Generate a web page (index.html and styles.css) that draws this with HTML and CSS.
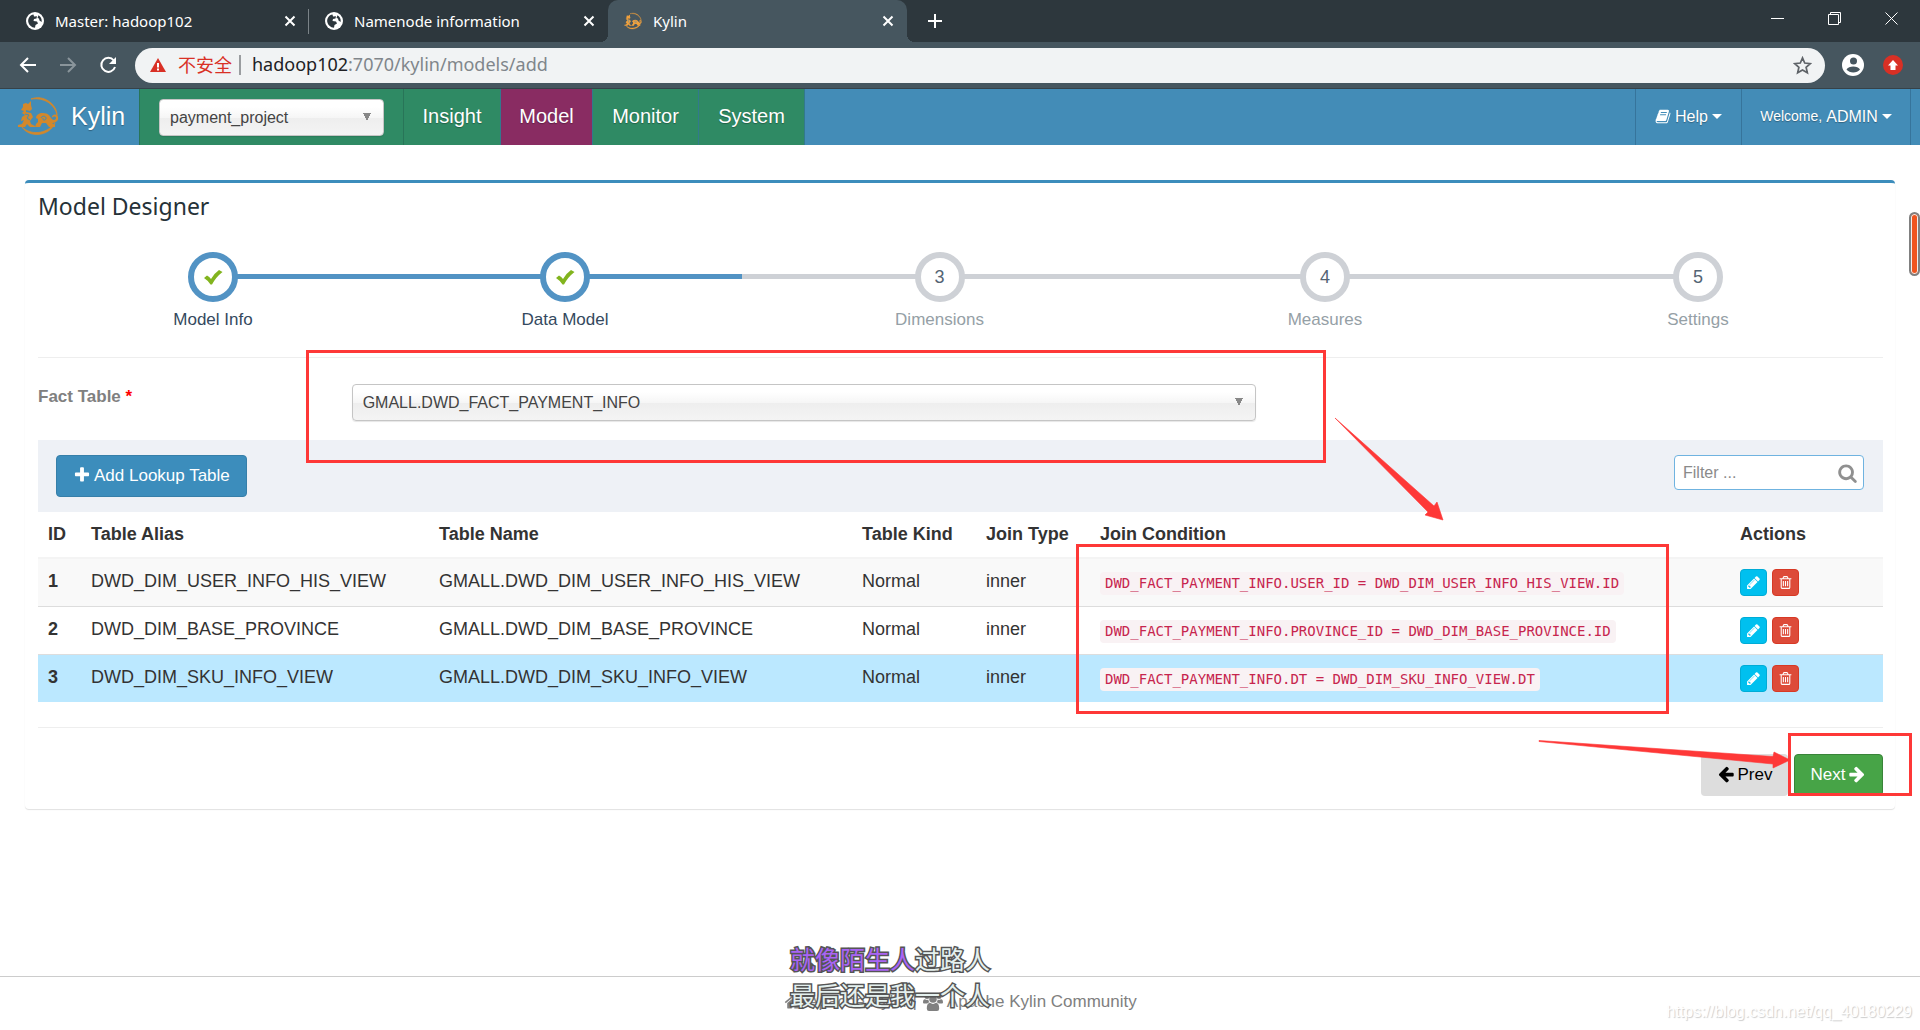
FILE: index.html
```html
<!DOCTYPE html>
<html lang="en">
<head>
<meta charset="utf-8">
<title>Kylin</title>
<link rel="stylesheet" href="styles.css">
</head>
<body>
<svg class="defs" aria-hidden="true">
  <symbol id="globe" viewBox="0 0 18 18"><circle cx="9" cy="9" r="9" fill="#fff"/><path d="M2.200 9.500C2 6 4 3 7.500 2.400L8 4.500 11 4.200 10.500 6.500 8 7 7.500 9 11 9.500 12 11.500 9.500 13 9 15.700C5.500 15.500 2.800 13 2.200 9.500ZM12.500 3.300C14.800 4.700 16 7 15.700 10L13.500 8.500 13 6.500 11.500 6Z" fill="#2d373d"/></symbol>
  <symbol id="cross" viewBox="0 0 12 12"><path d="M1.500 1.500l9 9M10.500 1.500l-9 9" stroke="currentColor" stroke-width="2" fill="none"/></symbol>
  <symbol id="kylin" viewBox="0 0 42 40"><path d="M14 3C26-2 40 8 40 19C38 9 28 1 14 3ZM38 27C32 41 12 42 5 31C13 39 29 39 38 27Z" fill="currentColor" stroke="currentColor" stroke-width=".8"/><path d="M6 8l3-1 2 1 3-3 0 4 1 4-2 2-4-1 0 2 5 1 2 4-3 4 1 3 4 2 0 1-5 0-3-3-2 3-7 0 0-2 4-1 2-4-3 1 1-4 3-2-3-2 2-2-3-1 2-3z" fill="currentColor"/><path d="M19 28l2-2 0-3-2-1c0-3 3-5 7-5 5 0 7 3 8 5 2 3 5 2 5 0 0-2-3-2-4 0-1-4 6-5 6-1 1 4-3 6-6 6l3 2 0 2-6 0-3-4-4 0-2 4-5 0z" fill="currentColor"/><path d="M24 22c1-3 6-2 5 1-1 2-4 1-3-1M8 18l4 1-2 3 3 2" fill="none" stroke="#438cb7" stroke-width="1"/></symbol>
  <symbol id="plus" viewBox="0 0 1792 1792"><path d="M1600 736v192q0 40-28 68t-68 28h-416v416q0 40-28 68t-68 28h-192q-40 0-68-28t-28-68v-416h-416q-40 0-68-28t-28-68v-192q0-40 28-68t68-28h416v-416q0-40 28-68t68-28h192q40 0 68 28t28 68v416h416q40 0 68 28t28 68z"/></symbol>
  <symbol id="check" viewBox="0 0 20 20"><path d="M1 11L4 8.500Q6.500 9.500 8 12Q11 6.500 16 3L19.500 5Q13 10 9 17.500H7.500Q5 13.500 1 11Z"/></symbol>
  <symbol id="search" viewBox="0 0 1792 1792"><path d="M1216 832q0-185-131.500-316.500t-316.500-131.500-316.500 131.500-131.500 316.500 131.500 316.500 316.500 131.500 316.500-131.500 131.500-316.500zm512 832q0 52-38 90t-90 38q-54 0-90-38l-343-342q-179 124-399 124-143 0-273.500-55.500t-225-150-150-225-55.500-273.500 55.500-273.500 150-225 225-150 273.500-55.500 273.500 55.500 225 150 150 225 55.500 273.500q0 220-124 399l343 343q37 37 37 90z"/></symbol>
  <symbol id="left" viewBox="0 0 1792 1792"><path d="M1664 896v128q0 53-32.500 90.500t-84.500 37.500h-704l293 294q38 36 38 90t-38 90l-75 76q-37 37-90 37-52 0-91-37l-651-652q-37-37-37-90 0-52 37-91l651-650q38-38 91-38 52 0 90 38l75 74q38 38 38 91t-38 91l-293 293h704q52 0 84.500 37.500t32.500 90.500z"/></symbol>
  <symbol id="right" viewBox="0 0 1792 1792"><path d="M1600 960q0 54-37 91l-651 651q-39 37-91 37-51 0-90-37l-75-75q-38-38-38-91t38-91l293-293h-704q-52 0-84.500-37.500t-32.500-90.500v-128q0-53 32.500-90.500t84.500-37.500h704l-293-294q-38-36-38-90t38-90l75-75q38-38 90-38 53 0 91 38l651 651q37 35 37 90z"/></symbol>
  <symbol id="pencil" viewBox="0 0 1792 1792"><path d="M491 1536l91-91-235-235-91 91v107h128v128h107zm523-928q0-22-22-22-10 0-17 7l-542 542q-7 7-7 17 0 22 22 22 10 0 17-7l542-542q7-7 7-17zm-54-192l416 416-832 832h-416v-416zm683 96q0 53-37 90l-166 166-416-416 166-165q36-38 90-38 53 0 91 38l235 234q37 39 37 91z"/></symbol>
  <symbol id="trash" viewBox="0 0 1792 1792"><path d="M704 736v576q0 14-9 23t-23 9h-64q-14 0-23-9t-9-23v-576q0-14 9-23t23-9h64q14 0 23 9t9 23zm256 0v576q0 14-9 23t-23 9h-64q-14 0-23-9t-9-23v-576q0-14 9-23t23-9h64q14 0 23 9t9 23zm256 0v576q0 14-9 23t-23 9h-64q-14 0-23-9t-9-23v-576q0-14 9-23t23-9h64q14 0 23 9t9 23zm128 724v-948h-896v948q0 22 7 40.500t14.500 27 10.500 8.500h832q3 0 10.500-8.500t14.500-27 7-40.500zm-672-1076h448l-48-117q-7-9-17-11h-317q-10 2-17 11zm928 32v64q0 14-9 23t-23 9h-96v948q0 83-47 143.500t-113 60.500h-832q-66 0-113-58.500t-47-141.500v-952h-96q-14 0-23-9t-9-23v-64q0-14 9-23t23-9h309l70-167q15-37 54-63t79-26h320q40 0 79 26t54 63l70 167h309q14 0 23 9t9 23z"/></symbol>
  <symbol id="home" viewBox="0 0 1792 1792"><path d="M1472 992v480q0 26-19 45t-45 19h-384v-384h-256v384h-384q-26 0-45-19t-19-45v-480q0-1 .5-3t.5-3l575-474 575 474q1 2 1 6zm223-69l-62 74q-8 9-21 11h-3q-13 0-21-7l-692-577-692 577q-12 8-24 7-13-2-21-11l-62-74q-8-10-7-23.500t11-21.500l719-599q32-26 76-26t76 26l244 204v-195q0-14 9-23t23-9h192q14 0 23 9t9 23v408l219 182q10 8 11 21.500t-7 23.500z"/></symbol>
  <symbol id="book" viewBox="0 0 1792 1792"><path d="M1703 478q40 57 18 129l-275 906q-19 64-76.500 107.500t-122.500 43.500h-923q-77 0-148.500-53.500t-99.500-131.500q-24-67-2-127 0-4 3-27t4-37q1-8-3-21.500t-3-19.500q2-11 8-21t16.500-23.500 16.500-23.500q23-38 45-91.500t30-91.500q3-10 .5-30t-.5-28q3-11 17-28t17-23q21-36 42-92t25-90q1-9-2.500-32t.5-28q4-13 22-30.500t22-22.500q19-26 42.500-84.500t27.500-96.500q1-8-3-25.500t-2-26.500q2-8 9-18t18-23 17-21q8-12 16.500-30.500t15-35 16-36 19.500-32 26.500-23.500 36-11.500 47.500 5.500l-1 3q38-9 51-9h761q74 0 114 56t18 130l-274 906q-36 119-71.500 153.500t-128.500 34.500h-869q-27 0-38 15-11 16-1 43 24 70 144 70h923q29 0 56-15.500t35-41.500l300-987q7-22 5-57 38 15 59 43zm-1064 2q-4 13 2 22.500t20 9.500h608q13 0 25.500-9.500t16.500-22.500l21-64q4-13-2-22.500t-20-9.500h-608q-13 0-25.500 9.500t-16.500 22.500zm-83 256q-4 13 2 22.500t20 9.500h608q13 0 25.500-9.500t16.500-22.500l21-64q4-13-2-22.500t-20-9.500h-608q-13 0-25.500 9.500t-16.500 22.500z"/></symbol>
  <symbol id="users" viewBox="0 0 20 18"><circle cx="4" cy="3.500" r="2.500"/><circle cx="16" cy="3.500" r="2.500"/><circle cx="10" cy="6" r="3.800"/><path d="M0 9.500C0 7 1 6 2 6.200Q4 7.500 5.300 6.500 5.500 8.500 6.500 9.300 5 9.500 4.300 10.500H1Q0 10.500 0 9.500ZM20 9.500C20 7 19 6 18 6.200Q16 7.500 14.700 6.500 14.500 8.500 13.500 9.300 15 9.500 15.700 10.500H19Q20 10.500 20 9.500ZM3.800 15.500C3.800 12 5 9.800 7 9.800Q10 12 13 9.800C15 9.800 16.200 12 16.200 15.500Q16.200 18 14 18H6Q3.800 18 3.800 15.500Z"/></symbol>
</svg>

<header class="browser">
  <div class="tabs">
    <div class="tab tab-split"><svg class="favicon"><use href="#globe"/></svg><span class="tab-name">Master: hadoop102</span><button class="tab-close" aria-label="Close tab"><svg><use href="#cross"/></svg></button></div>
    <div class="tab"><svg class="favicon"><use href="#globe"/></svg><span class="tab-name">Namenode information</span><button class="tab-close" aria-label="Close tab"><svg><use href="#cross"/></svg></button></div>
    <div class="tab tab-active"><svg class="favicon favicon-kylin"><use href="#kylin"/></svg><span class="tab-name">Kylin</span><button class="tab-close" aria-label="Close tab"><svg><use href="#cross"/></svg></button></div>
    <button class="new-tab" aria-label="New tab"><svg viewBox="0 0 16 16"><path d="M8 1v14M1 8h14" stroke="#fff" stroke-width="2"/></svg></button>
    <div class="window-buttons">
      <button aria-label="Minimize"><svg viewBox="0 0 14 14"><path d="M0 6.500h13" stroke="#fff"/></svg></button>
      <button aria-label="Restore"><svg viewBox="0 0 14 14"><path d="M.5 2.500h10v10h-10zM2.500 2.500v-2h10v10h-2" fill="none" stroke="#fff"/></svg></button>
      <button aria-label="Close"><svg viewBox="0 0 14 14"><path d="M.5.5l12 12M12.500.5l-12 12" stroke="#fff"/></svg></button>
    </div>
  </div>
  <div class="toolbar">
    <button class="tool" aria-label="Back"><svg viewBox="0 0 18 18"><path d="M17 9H2M9 2L2 9l7 7" fill="none" stroke="#fff" stroke-width="2"/></svg></button>
    <button class="tool" aria-label="Forward"><svg viewBox="0 0 18 18"><path d="M1 9h15M9 2l7 7-7 7" fill="none" stroke="#8a959b" stroke-width="2"/></svg></button>
    <button class="tool" aria-label="Reload"><svg viewBox="0 0 18 18"><path d="M14.800 4.500A7 7 0 1 0 16 11" fill="none" stroke="#fff" stroke-width="2"/><path d="M17 1v7h-7z" fill="#fff"/></svg></button>
    <div class="address">
      <svg class="warn" viewBox="0 0 16 14"><path d="M8 0l8 14H0z" fill="#d93025"/><path d="M8 5v4.500M8 10.500v2" stroke="#fff" stroke-width="2"/></svg>
      <span class="unsafe">不安全</span>
      <span class="url"><span class="host">hadoop102</span>:7070/kylin/models/add</span>
      <svg class="star" viewBox="0 0 18 18"><path d="M9 1.800l2.100 4.900 5.300.5-4 3.500 1.200 5.200L9 13.200l-4.600 2.700 1.200-5.200-4-3.500 5.300-.5z" fill="none" stroke="#5f6368" stroke-width="1.600"/></svg>
    </div>
    <svg class="profile" viewBox="0 0 22 22"><circle cx="11" cy="11" r="11" fill="#fff"/><circle cx="11.500" cy="7" r="3.500" fill="#46565f"/><path d="M4.500 15.500c2-4 11.500-4 13.500 0-3 4-10.500 4-13.500 0z" fill="#46565f"/></svg>
    <svg class="update" viewBox="0 0 20 20"><circle cx="10" cy="10" r="10" fill="#d93025"/><path d="M10 5l5 5.500h-2.500V15h-5v-4.500H5z" fill="#fff"/></svg>
  </div>
</header>

<nav class="navbar">
  <a class="brand" href="#"><svg><use href="#kylin"/></svg>Kylin</a>
  <div class="project"><select class="chosen" aria-label="Project"><option>payment_project</option></select></div>
  <a class="nav-item nav-insight" href="#">Insight</a>
  <a class="nav-item nav-model" href="#">Model</a>
  <a class="nav-item nav-monitor" href="#">Monitor</a>
  <a class="nav-item nav-system" href="#">System</a>
  <div class="nav-right">
    <a class="menu menu-help" href="#"><svg><use href="#book"/></svg>Help<span class="caret"></span></a>
    <a class="menu menu-user" href="#"><small>Welcome,</small>ADMIN<span class="caret"></span></a>
  </div>
</nav>

<main>
  <section class="card">
    <h1>Model Designer</h1>
    <ol class="steps">
      <li class="step done step-info"><span class="dot"><svg><use href="#check"/></svg></span>Model Info</li>
      <li class="step done step-data"><span class="dot"><svg><use href="#check"/></svg></span>Data Model</li>
      <li class="step step-dims"><span class="dot">3</span>Dimensions</li>
      <li class="step step-meas"><span class="dot">4</span>Measures</li>
      <li class="step step-set"><span class="dot">5</span>Settings</li>
    </ol>
    <div class="fact">
      <label for="fact">Fact Table <b>*</b></label>
      <select class="chosen" id="fact"><option>GMALL.DWD_FACT_PAYMENT_INFO</option></select>
    </div>
    <div class="table-tools">
      <button class="btn btn-primary"><svg><use href="#plus"/></svg>Add Lookup Table</button>
      <div class="filter"><input type="text" placeholder="Filter ..." aria-label="Filter"><svg><use href="#search"/></svg></div>
    </div>
    <table>
      <colgroup><col class="c-id"><col class="c-alias"><col class="c-name"><col class="c-kind"><col class="c-type"><col class="c-cond"><col class="c-act"></colgroup>
      <thead><tr><th>ID</th><th>Table Alias</th><th>Table Name</th><th>Table Kind</th><th>Join Type</th><th>Join Condition</th><th>Actions</th></tr></thead>
      <tbody>
        <tr class="odd"><td><b>1</b></td><td>DWD_DIM_USER_INFO_HIS_VIEW</td><td>GMALL.DWD_DIM_USER_INFO_HIS_VIEW</td><td>Normal</td><td>inner</td><td class="cond"><code>DWD_FACT_PAYMENT_INFO.USER_ID = DWD_DIM_USER_INFO_HIS_VIEW.ID</code></td><td class="acts"><div class="actions"><button class="edit" aria-label="Edit"><svg><use href="#pencil"/></svg></button><button class="delete" aria-label="Delete"><svg><use href="#trash"/></svg></button></div></td></tr>
        <tr><td><b>2</b></td><td>DWD_DIM_BASE_PROVINCE</td><td>GMALL.DWD_DIM_BASE_PROVINCE</td><td>Normal</td><td>inner</td><td class="cond"><code>DWD_FACT_PAYMENT_INFO.PROVINCE_ID = DWD_DIM_BASE_PROVINCE.ID</code></td><td class="acts"><div class="actions"><button class="edit" aria-label="Edit"><svg><use href="#pencil"/></svg></button><button class="delete" aria-label="Delete"><svg><use href="#trash"/></svg></button></div></td></tr>
        <tr class="hover"><td><b>3</b></td><td>DWD_DIM_SKU_INFO_VIEW</td><td>GMALL.DWD_DIM_SKU_INFO_VIEW</td><td>Normal</td><td>inner</td><td class="cond"><code>DWD_FACT_PAYMENT_INFO.DT = DWD_DIM_SKU_INFO_VIEW.DT</code></td><td class="acts"><div class="actions"><button class="edit" aria-label="Edit"><svg><use href="#pencil"/></svg></button><button class="delete" aria-label="Delete"><svg><use href="#trash"/></svg></button></div></td></tr>
      </tbody>
    </table>
    <div class="pager">
      <button class="btn btn-prev"><svg><use href="#left"/></svg>Prev</button>
      <button class="btn btn-next">Next<svg><use href="#right"/></svg></button>
    </div>
  </section>
</main>

<footer>
  <a href="#"><svg><use href="#home"/></svg>Apache Kylin</a><span>|</span><a href="#"><svg><use href="#users"/></svg>Apache Kylin Community</a>
</footer>

<div class="scroll-thumb"></div>
<svg class="marks" width="1920" height="1030" aria-hidden="true">
  <g fill="none" stroke="#fe3837" stroke-width="3"><path d="M307.500 351.500h1017v110h-1017zM1077.500 545.500h590v167h-590zM1789.500 734.500h121v60h-121z"/></g>
  <path d="M1335 418L1434 506l3-4 6 18-18-5 3-3zM1539 740.500v1l234 22.500v4l17-8-16-8-1 4.500z" fill="#fe3837" stroke="#fe3837" stroke-width=".6"/>
</svg>
<p class="lyrics"><span><em>就像陌生人</em>过路人</span><span>最后还是我一个人</span></p>
<p class="watermark">https://blog.csdn.net/qq_40180229</p>
</body>
</html>
```
FILE: styles.css
```css
* { box-sizing: border-box; }
body {
  margin: 0;
  min-height: 100vh;
  display: flex;
  flex-direction: column;
  position: relative;
  overflow-x: hidden;
  background: #fff;
  color: #333;
  font: 18px/25px "Liberation Sans", Arial, sans-serif;
}
a { color: inherit; text-decoration: none; }
button, input, select { font: inherit; color: inherit; margin: 0; }
button { padding: 0; border: 0; background: none; display: flex; align-items: center; justify-content: center; }
svg { fill: currentColor; flex: none; }
.defs { display: none; }

/* browser window */
.browser { font-family: "Noto Sans", "Noto Sans CJK SC", sans-serif; color: #fff; background: #46565f; border-bottom: 1px solid #364249; }
.tabs { display: flex; height: 42px; padding-left: 10px; background: #2d373d; }
.tab { display: flex; align-items: center; width: 299px; height: 42px; padding: 0 13px 0 16px; gap: 11px; font-size: 15px; position: relative; }
.tab-split::after { content: ""; position: absolute; right: 0; top: 9px; width: 1px; height: 25px; background: #7b8388; }
.tab-active { background: #46565f; border-radius: 10px 10px 0 0; }
.tab-active::before, .tab-active::after { content: ""; position: absolute; bottom: 0; width: 8px; height: 8px; }
.tab-active::before { right: 100%; background: radial-gradient(circle at 0 0, #2d373d 8px, #46565f 8px); }
.tab-active::after { left: 100%; background: radial-gradient(circle at 100% 0, #2d373d 8px, #46565f 8px); }
.favicon { width: 18px; height: 18px; }
.favicon-kylin { color: #f0a03c; }
.tab-name { flex: 1; }
.tab-close svg { width: 12px; height: 12px; }
.new-tab { margin-left: 20px; }
.new-tab svg { width: 16px; height: 16px; }
.window-buttons { margin-left: auto; display: flex; height: 37px; }
.window-buttons button { width: 57px; }
.window-buttons svg { width: 14px; height: 14px; }
.toolbar { display: flex; align-items: center; height: 46px; padding: 0 17px 0 19px; }
.tool { width: 18px; margin-right: 22px; }
.tool svg { width: 18px; height: 18px; }
.tool:nth-child(3) { margin-right: 18px; }
.address { flex: 1; display: flex; align-items: center; height: 35px; padding: 0 13px 0 15px; border-radius: 18px; background: #f1f3f4; font-size: 18px; }
.warn { width: 16px; height: 14px; margin-right: 12px; }
.unsafe { color: #d93025; line-height: 20px; padding-right: 7px; border-right: 2px solid #9a9da0; margin-right: 11px; }
.url { flex: 1; padding-bottom: 2px; color: #80868b; }
.host { color: #202124; }
.star { width: 19px; height: 19px; }
.profile { width: 22px; height: 22px; margin: 0 19px 0 17px; }
.update { width: 20px; height: 20px; }

/* application bar */
.navbar { display: flex; height: 56px; background: #438cb7; color: #fff; text-shadow: 0 1px 1px rgba(0, 0, 0, .3); }
.brand { display: flex; align-items: center; width: 139px; padding: 0 0 2px 17px; gap: 12px; font-size: 25px; }
.brand svg { width: 42px; height: 40px; color: #d3882b; }
.project { width: 264px; display: flex; align-items: center; padding: 0 19px; background: #2f8a64; border-left: 1px solid #287558; }
.chosen {
  appearance: none;
  width: 100%;
  height: 37px;
  padding: 0 10px;
  border: 1px solid #c5c5c5;
  border-radius: 4px;
  color: #444;
  font-size: 16px;
  background:
    linear-gradient(to bottom right, #888 50%, transparent 50%) right 12px top 13px / 4px 8px no-repeat,
    linear-gradient(to bottom left, #888 50%, transparent 50%) right 16px top 13px / 4px 8px no-repeat,
    linear-gradient(#fff 20%, #f6f6f6 50%, #eee 52%, #f4f4f4 100%);
  box-shadow: 0 1px 1px rgba(0, 0, 0, .1);
}
.nav-item { display: flex; align-items: center; justify-content: center; padding-bottom: 2px; font-size: 20px; background: #2f8a64; border-right: 1px solid #32798c; }
.nav-insight { width: 98px; border-left: 1px solid #287558; }
.nav-model { width: 92px; background: #892c62; }
.nav-monitor { width: 106px; }
.nav-system { width: 106px; }
.nav-right { margin-left: auto; display: flex; padding-right: 9px; }
.menu { display: flex; align-items: center; justify-content: center; gap: 4px; padding-bottom: 2px; font-size: 16px; border-left: 1px solid #36749b; }
.menu svg { width: 16px; height: 17px; }
.menu small { font-size: 14px; }
.menu-help { width: 106px; }
.menu-user { width: 170px; border-right: 1px solid #36749b; }
.caret { border: 5px solid transparent; border-top-color: #fff; border-bottom: 0; }

/* wizard card */
main { flex: 1; padding: 35px 25px; }
.card { padding: 0 12px 13px 13px; border-top: 3px solid #3c8dbc; border-radius: 4px; box-shadow: 0 1px 1px rgba(0, 0, 0, .12); }
h1 { margin: 0; padding: 9px 0 0; font: 400 23px/28px "Noto Sans", sans-serif; color: #263238; }
.steps { display: flex; margin: 0; padding: 32px 0 25px; list-style: none; border-bottom: 1px solid #eee; font-size: 17px; }
.step { position: relative; text-align: center; color: #95a0a6; height: 80px; }
.step::before { content: ""; position: absolute; left: 0; right: 0; top: 22px; height: 5px; background: #ced1d6; }
.step-info { flex: 350; }
.step-data { flex: 354; }
.step-dims { flex: 395; }
.step-meas { flex: 376; }
.step-set { flex: 370; }
.step-info::before { left: 50%; }
.step-set::before { right: 50%; }
.done { color: #34495e; }
.done::before { background: #5293c4; }
.dot { position: relative; display: flex; align-items: center; justify-content: center; width: 50px; height: 50px; margin: 0 auto 5px; border: 6px solid #ced1d6; border-radius: 50%; background: #fff; color: #546474; font-size: 18px; }
.done .dot { border-color: #5293c4; color: #82b41e; }
.dot svg { width: 20px; height: 20px; }
.fact { display: flex; align-items: flex-start; padding: 26px 0 19px; }
.fact label { width: 17%; line-height: 25px; font-size: 17px; font-weight: 700; color: #808080; }
.fact label b { color: #f00; }
.fact .chosen { width: 49%; }
.table-tools { display: flex; align-items: flex-start; justify-content: space-between; height: 72px; padding: 15px 19px 15px 18px; background: #eef1f6; }
.btn { height: 42px; gap: 3px; border-radius: 4px; padding: 0 16px 2px; font-size: 17px; }
.btn svg { width: 18px; height: 18px; }
.btn-primary { background: #3c8dbc; border: 1px solid #367fa9; color: #fff; }
.filter { position: relative; width: 190px; }
.filter input { width: 100%; height: 35px; padding: 0 8px; border: 1px solid #6fb3e0; border-radius: 4px; background: #fff; font-size: 16px; display: block; }
.filter input::placeholder { color: #8a8a8a; }
.filter svg { position: absolute; right: 6px; top: 8px; width: 21px; height: 20px; color: #909090; }
table { width: 100%; table-layout: fixed; border-collapse: collapse; white-space: nowrap; }
.c-id { width: 43px; }
.c-alias { width: 348px; }
.c-name { width: 423px; }
.c-kind { width: 124px; }
.c-type { width: 114px; }
.c-act { width: 153px; }
th { height: 46px; padding: 0 10px; text-align: left; border-bottom: 2px solid #f4f4f4; }
td { height: 48px; padding: 0 10px 2px; border-top: 1px solid #ddd; }
td.cond, td.acts { padding-bottom: 0; }
tbody tr:first-child td { border-top: 0; }
.odd { background: #f9f9f9; }
.hover { background: #bbe8ff; }
code { display: inline-block; padding: 0 5px; line-height: 23px; border-radius: 4px; background: #f9f2f4; color: #c7254e; font-family: "DejaVu Sans Mono", monospace; font-size: 14px; }
.actions { display: flex; gap: 5px; }
.actions button { width: 27px; height: 27px; border-radius: 4px; color: #fff; }
.actions svg { width: 15px; height: 15px; }
.actions .edit { background: #00c0ef; border: 1px solid #00acd6; }
.actions .delete { background: #dd4b39; border: 1px solid #d73925; }
.pager { display: flex; justify-content: flex-end; gap: 6px; margin-top: 25px; padding-top: 26px; border-top: 1px solid #eee; }
.btn-prev { background: #ddd; color: #000; width: 87px; }
.btn-next { background: #47a447; border: 1px solid #398439; color: #fff; width: 89px; }

footer { display: flex; justify-content: center; gap: 6px; height: 54px; border-top: 1px solid #ccc; font-size: 17px; line-height: 50px; color: #808080; }
footer a { display: flex; align-items: center; gap: 4px; height: 50px; }
footer svg { width: 20px; height: 18px; }

/* layers above the page */
.scroll-thumb { position: absolute; right: 0; top: 212px; width: 11px; height: 64px; border: 2px solid #808080; border-radius: 6px; background: #f0541e; box-shadow: inset 0 0 0 1px #f4ece8; }
.marks { position: absolute; left: 0; top: 0; pointer-events: none; }
.lyrics { position: absolute; left: 0; right: 0; top: 940px; margin: 0 140px 0 0; display: flex; flex-direction: column; align-items: center; font: 25px/36px "Noto Sans CJK SC", sans-serif; color: #e4f0ee; -webkit-text-stroke: 3px #555; paint-order: stroke fill; pointer-events: none; }
.lyrics em { font-style: normal; color: #a964f5; }
.watermark { position: absolute; right: 8px; top: 1000px; margin: 0; font-size: 16px; line-height: 24px; color: #fff; text-shadow: 1px 1px 1px #ccc; }
```
